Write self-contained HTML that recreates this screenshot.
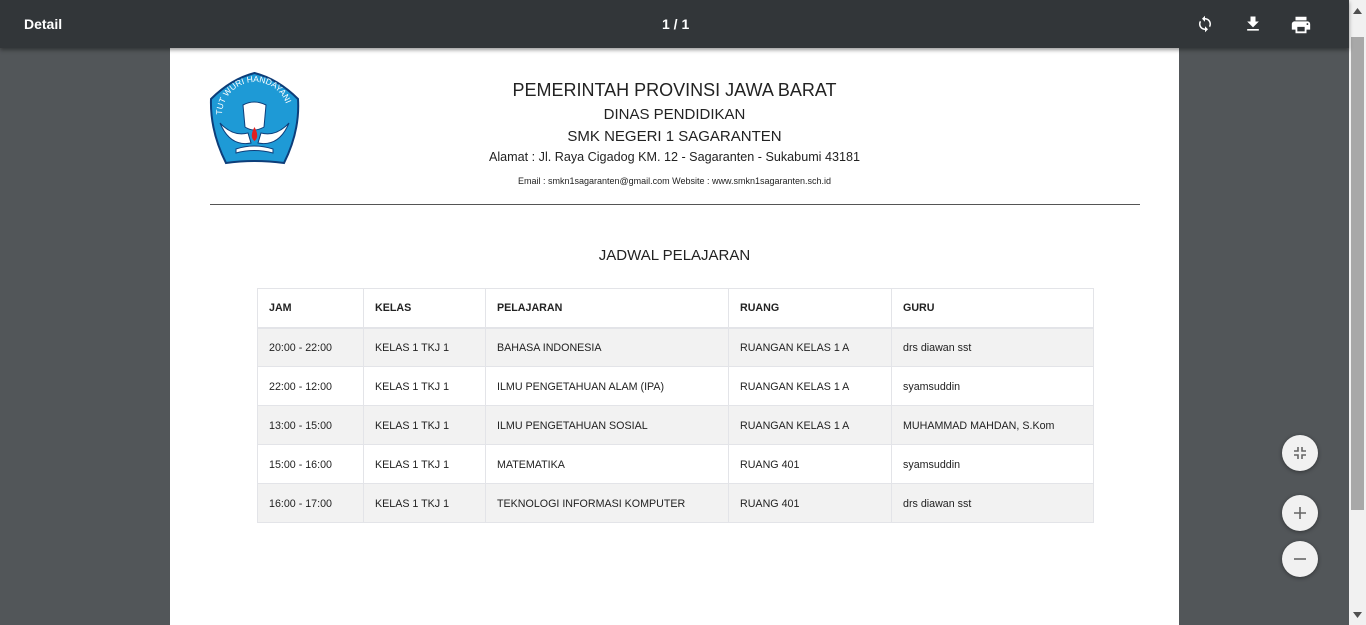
<!DOCTYPE html>
<html><head><meta charset="utf-8">
<style>
*{margin:0;padding:0;box-sizing:border-box}
body{width:1366px;height:625px;overflow:hidden;background:#525659;font-family:"Liberation Sans",Arial,sans-serif;position:relative}
.bar{position:absolute;left:0;top:0;width:1349px;height:48px;background:#323639;color:#fff;box-shadow:0 2px 4px rgba(0,0,0,.4);z-index:2}
.bar .t{position:absolute;left:24px;top:16px;font-size:14px;font-weight:bold}
.bar .p{position:absolute;left:662px;top:16px;font-size:14px;font-weight:bold}
.sb{position:absolute;left:1349px;top:0;width:17px;height:625px;background:#f1f1f1}
.thumb{position:absolute;left:1351px;top:37px;width:13px;height:473px;background:#a8a8a8}
.page{position:absolute;left:170px;top:48px;width:1009px;height:577px;background:#fff}
.hd{position:absolute;left:170px;width:1009px;text-align:center;color:#222}
.line{position:absolute;left:210px;top:204px;width:930px;height:1px;background:#555}
table{position:absolute;left:257px;top:288px;border-collapse:collapse;font-size:10.7px;color:#222}
td,th{border:1px solid #e3e4e8;padding:2px 0 0 11px;height:39px;text-align:left;vertical-align:middle}
th{font-weight:bold;border-bottom:2px solid #e3e4e8;padding-top:1px}
tbody tr:nth-child(odd){background:#f2f2f2}
.fab{position:absolute;left:1282px;width:36px;height:36px;border-radius:50%;background:#f1f1f1;box-shadow:0 1px 4px rgba(0,0,0,.4)}
</style></head><body>
<div class="bar"><span class="t">Detail</span><span class="p">1 / 1</span>
<svg style="position:absolute;left:1196px;top:15px" width="18" height="18" viewBox="0 0 24 24" fill="#fff"><path d="M12 4V1L8 5l4 4V6c3.3 0 6 2.7 6 6 0 1-.25 2-.7 2.8l1.46 1.46A8 8 0 0 0 20 12c0-4.4-3.6-8-8-8zM6 12c0-1 .25-2 .7-2.8L5.24 7.740A8 8 0 0 0 4 12c0 4.4 3.6 8 8 8v3l4-4-4-4v3c-3.3 0-6-2.7-6-6z"/></svg>
<svg style="position:absolute;left:1243px;top:14px" width="20" height="20" viewBox="0 0 24 24" fill="#fff"><path d="M19 9h-4V3H9v6H5l7 7 7-7zM5 18v2h14v-2H5z"/></svg>
<svg style="position:absolute;left:1290px;top:14px" width="22" height="22" viewBox="0 0 24 24" fill="#fff"><path d="M19 8H5c-1.66 0-3 1.34-3 3v6h4v4h12v-4h4v-6c0-1.660-1.34-3-3-3zm-3 11H8v-5h8v5zm3-7c-.55 0-1-.45-1-1s.45-1 1-1 1 .45 1 1-.45 1-1 1zm-1-9H6v4h12V3z"/></svg>
</div>
<div class="sb"></div><div class="thumb"></div>
<svg style="position:absolute;left:1353px;top:8px" width="9" height="6"><path d="M0 6L4.5 0 9 6z" fill="#505050"/></svg>
<svg style="position:absolute;left:1353px;top:612px" width="9" height="6"><path d="M0 0L4.5 6 9 0z" fill="#505050"/></svg>
<div class="page"></div>
<svg style="position:absolute;left:208px;top:71px" width="93" height="96" viewBox="0 0 93 96">
<path d="M46.5 2 Q70 8 90 28 Q92 60 76 92 Q46 88 18 92 Q2 60 3 28 Q23 8 46.5 2z" fill="#1e9ad6" stroke="#0d3e7a" stroke-width="2"/>
<path id="arc" d="M14 44 A33 33 0 0 1 80 44" fill="none"/>
<text font-size="8.5" fill="#fff" font-family="Liberation Sans"><textPath href="#arc">TUT WURI HANDAYANI</textPath></text>
<path d="M35 34 Q46 28 58 34 L56 56 Q46 62 37 56z" fill="#fff" stroke="#0d3e7a"/>
<path d="M12 52 Q25 66 40 62 L43 72 Q22 76 12 52z M81 52 Q68 66 53 62 L50 72 Q71 76 81 52z" fill="#fff" stroke="#0d3e7a"/>
<path d="M46.5 56 Q52 66 46.5 70 Q41 66 46.5 56z" fill="#e02020"/>
<path d="M28 78 Q46 72 65 78 L65 82 Q46 77 28 82z" fill="#fff" stroke="#0d3e7a"/>
</svg>
<div class="hd" style="top:80px;font-size:18px">PEMERINTAH PROVINSI JAWA BARAT</div>
<div class="hd" style="top:106px;font-size:15px">DINAS PENDIDIKAN</div>
<div class="hd" style="top:128px;font-size:15px">SMK NEGERI 1 SAGARANTEN</div>
<div class="hd" style="top:150px;font-size:12.6px">Alamat : Jl. Raya Cigadog KM. 12 - Sagaranten - Sukabumi 43181</div>
<div class="hd" style="top:176px;font-size:9px">Email : smkn1sagaranten@gmail.com Website : www.smkn1sagaranten.sch.id</div>
<div class="line"></div>
<div class="hd" style="top:247px;font-size:15px">JADWAL PELAJARAN</div>
<table>
<colgroup><col style="width:106px"><col style="width:122px"><col style="width:243px"><col style="width:163px"><col style="width:202px"></colgroup>
<thead><tr><th>JAM</th><th>KELAS</th><th>PELAJARAN</th><th>RUANG</th><th>GURU</th></tr></thead>
<tbody>
<tr><td>20:00 - 22:00</td><td>KELAS 1 TKJ 1</td><td>BAHASA INDONESIA</td><td>RUANGAN KELAS 1 A</td><td>drs diawan sst</td></tr>
<tr><td>22:00 - 12:00</td><td>KELAS 1 TKJ 1</td><td>ILMU PENGETAHUAN ALAM (IPA)</td><td>RUANGAN KELAS 1 A</td><td>syamsuddin</td></tr>
<tr><td>13:00 - 15:00</td><td>KELAS 1 TKJ 1</td><td>ILMU PENGETAHUAN SOSIAL</td><td>RUANGAN KELAS 1 A</td><td>MUHAMMAD MAHDAN, S.Kom</td></tr>
<tr><td>15:00 - 16:00</td><td>KELAS 1 TKJ 1</td><td>MATEMATIKA</td><td>RUANG 401</td><td>syamsuddin</td></tr>
<tr><td>16:00 - 17:00</td><td>KELAS 1 TKJ 1</td><td>TEKNOLOGI INFORMASI KOMPUTER</td><td>RUANG 401</td><td>drs diawan sst</td></tr>
</tbody></table>
<div class="fab" style="top:435px"><svg width="36" height="36" viewBox="0 0 36 36" fill="none" stroke="#666" stroke-width="1.6"><path d="M16 12v4h-4M20 12v4h4M16 24v-4h-4M20 24v-4h4"/></svg></div>
<div class="fab" style="top:495px"><svg width="36" height="36" viewBox="0 0 36 36" stroke="#666" stroke-width="1.6"><path d="M18 12v12M12 18h12"/></svg></div>
<div class="fab" style="top:541px"><svg width="36" height="36" viewBox="0 0 36 36" stroke="#666" stroke-width="1.6"><path d="M12 18h12"/></svg></div>
</body></html>
